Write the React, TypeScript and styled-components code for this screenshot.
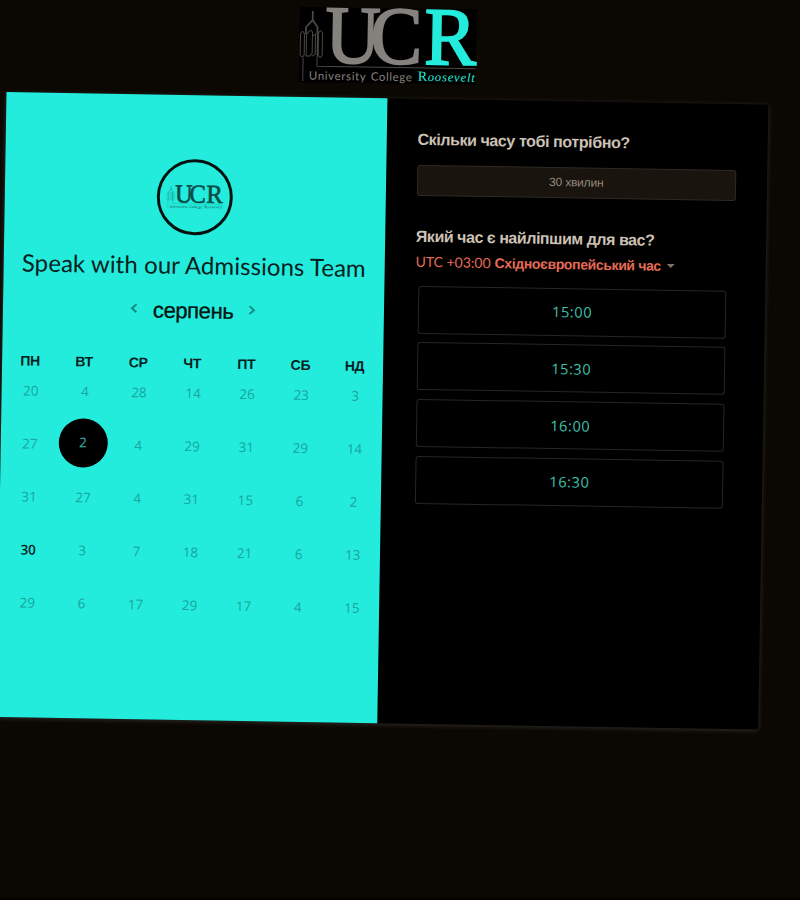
import React from "react";
import styled, { createGlobalStyle } from "styled-components";

const CYAN = "#24ecdd";

const GlobalStyle = createGlobalStyle`
  html, body { margin: 0; padding: 0; background: #0b0703; overflow: hidden; }
  *, *::before, *::after { box-sizing: border-box; }
  button { font: inherit; padding: 0; margin: 0; background: none; border: 0; cursor: pointer; }
  h1, h2, h3 { margin: 0; }
`;

const Viewport = styled.div`
  width: 100%;
  height: 100vh;
  overflow: hidden;
  background: #0b0703;
  border-bottom: 2px solid #030100;
  font-family: "Liberation Sans", Arial, sans-serif;
`;

const Page = styled.main`
  width: 800px;
  transform: rotate(0.935deg);
  transform-origin: 0 0;
`;

const Header = styled.header`
  height: 91.5px;
  padding: 2px 0 0 300px;
`;

const LogoSvg = styled.svg<{ $w: number }>`
  display: block;
  width: ${(p) => p.$w}px;
  height: ${(p) => (p.$w * 75) / 177}px;
`;

const Card = styled.section`
  display: grid;
  grid-template-columns: 381px 381px;
  width: 762px;
  height: 625px;
  margin-left: 7.7px;
  border-radius: 3px;
  background: #000;
  box-shadow: 0 1px 5px 0 #33302c;
`;

const DatePane = styled.div`
  display: flex;
  flex-direction: column;
  align-items: center;
  background: ${CYAN};
  padding-top: 64px;
`;

const Avatar = styled.div`
  width: 76px;
  height: 76px;
  flex: none;
  border: 3px solid #04110f;
  border-radius: 50%;
  display: flex;
  align-items: center;
  justify-content: center;
`;

const Title = styled.h1`
  margin-top: 13px;
  height: 34px;
  font: 400 24px/34px Lato, sans-serif;
  letter-spacing: 0.07px;
  white-space: nowrap;
  color: #07211e;
`;

const MonthBar = styled.div`
  display: flex;
  align-items: center;
  justify-content: center;
  gap: 15px;
  height: 30px;
  margin-top: 14px;
`;

const MonthName = styled.h2`
  font-size: 22px;
  line-height: 30px;
  font-weight: 400;
  letter-spacing: -0.4px;
  color: #041512;
  -webkit-text-stroke: 0.35px #041512;
`;

const ArrowButton = styled.button`
  width: 8px;
  height: 12px;
  margin-top: -3px;
  display: flex;
  color: #128d84;
`;

const WeekHeader = styled.div`
  display: grid;
  grid-template-columns: repeat(7, 54.1px);
  height: 20px;
  margin-top: 27.3px;
`;

const Weekday = styled.span`
  text-align: center;
  font-size: 14px;
  line-height: 20px;
  font-weight: 700;
  letter-spacing: -0.3px;
  color: #04211e;
`;

const Days = styled.div`
  display: grid;
  grid-template-columns: repeat(7, 54.1px);
  grid-auto-rows: 53px;
  margin-top: -5.5px;
`;

const Day = styled.button<{ $kind: "muted" | "open" | "selected" }>`
  width: 49px;
  height: 49px;
  margin: 0 0 0 2.8px;
  border-radius: 50%;
  font: ${(p) => (p.$kind === "open" ? 600 : 400)} 13.5px/49px "Open Sans", sans-serif;
  padding: ${(p) => (p.$kind === "selected" ? "0" : "2px 0 0 2px")};
  background: ${(p) => (p.$kind === "selected" ? "#000" : "transparent")};
  color: ${(p) => (p.$kind === "muted" ? "#16a69b" : p.$kind === "open" ? "#04211e" : "#31b5a9")};
`;

const TimePane = styled.div`
  padding: 30px 0 0 31px;
`;

const Question = styled.h3<{ $tracking: number }>`
  height: 22px;
  font-size: 16px;
  line-height: 22px;
  font-weight: 700;
  letter-spacing: ${(p) => p.$tracking}px;
  color: #cdc2b5;
  white-space: nowrap;
`;

const Duration = styled.button`
  display: block;
  width: 319px;
  height: 31px;
  margin: 14px 0 30px;
  border: 1px solid #2f2a23;
  border-radius: 3px;
  background: #1a140e;
  color: #94897b;
  font-size: 12px;
  letter-spacing: -0.2px;
`;

const Zone = styled.button`
  display: flex;
  align-items: center;
  height: 24px;
  margin-top: 2px;
  white-space: nowrap;
  color: #e66b56;
`;

const Offset = styled.span`
  margin-right: 4px;
  font: 400 14px/24px Lato, sans-serif;
`;

const ZoneName = styled.span`
  font-size: 14px;
  font-weight: 700;
  letter-spacing: -0.36px;
`;

const Caret = styled.span`
  margin: 1px 0 0 6px;
  border: 4px solid transparent;
  border-top-color: #7d7064;
  border-bottom: 0;
`;

const Slots = styled.div`
  display: grid;
  grid-auto-rows: 48px;
  gap: 8.8px;
  width: 308px;
  margin: 12px 0 0 3.5px;
`;

const Slot = styled.button`
  border: 1px solid #292621;
  border-radius: 3px;
  color: #3fc1ad;
  font: 400 14.5px/45px "Open Sans", sans-serif;
  letter-spacing: 0.6px;
`;

type LogoProps = { width: number; ink: string; accent: string; line: string; backdrop?: string };

function Logo({ width, ink, accent, line, backdrop }: LogoProps) {
  const serif = '"Liberation Serif", serif';
  return (
    <LogoSvg $w={width} viewBox="0 0 177 75" overflow="visible">
      {backdrop && <rect width="177" height="75" fill={backdrop} />}
      <g fill="none" stroke={line} strokeWidth="1">
        <path d="M13 4V13L6.500 20V27M13 13L18 20V27" strokeWidth="1.800" />
        <path d="M1 27q2-5 4 0V48q-2 4-4 0ZM9 25q2-3 4 0V46l-2 3H7V28ZM13 29l3-2V47l-3 2M19 26q2-5 4 0V48q-2 4-4 0ZM4 51V74M18 27V59H177" />
      </g>
      <g fontFamily={serif} fontSize="82" strokeWidth="2">
        <text x="26" y="55" fill={ink} stroke={ink} textLength="55" lengthAdjust="spacingAndGlyphs">U</text>
        <text x="71" y="55" fill={ink} stroke={ink} textLength="52" lengthAdjust="spacingAndGlyphs">C</text>
        <text x="125" y="55" fill={accent} stroke={accent} textLength="52" lengthAdjust="spacingAndGlyphs">R</text>
      </g>
      <g fill={ink} fontFamily="Lato, sans-serif" fontSize="11.500">
        <text x="10" y="72.500" textLength="57">University</text>
        <text x="72" y="72.500" textLength="41">College</text>
      </g>
      <text x="119" y="72" fill={accent} fontFamily={serif} fontSize="14">R</text>
      <text x="129" y="72" fill={accent} fontFamily={serif} fontStyle="italic" fontSize="12.500" textLength="47">oosevelt</text>
    </LogoSvg>
  );
}

function Chevron({ flip }: { flip?: boolean }) {
  return (
    <svg width="8" height="12" viewBox="0 0 8 12" fill="none" stroke="currentColor" strokeWidth="2">
      <path d={flip ? "M1.500 2L6 6L1.500 10" : "M6.500 2L2 6L6.500 10"} />
    </svg>
  );
}

const weekdays = ["ПН", "ВТ", "СР", "ЧТ", "ПТ", "СБ", "НД"];
const days = [
  20, 4, 28, 14, 26, 23, 3,
  27, 2, 4, 29, 31, 29, 14,
  31, 27, 4, 31, 15, 6, 2,
  30, 3, 7, 18, 21, 6, 13,
  29, 6, 17, 29, 17, 4, 15,
];
const SELECTED = 8;
const OPEN = 21;
const slots = ["15:00", "15:30", "16:00", "16:30"];

export default function App() {
  return (
    <>
      <GlobalStyle />
      <Viewport>
        <Page>
          <Header>
            <Logo width={177} ink="#85827d" accent={CYAN} line="#4a4844" backdrop="#000" />
          </Header>
          <Card>
            <DatePane>
              <Avatar>
                <Logo width={56} ink="#0a4a45" accent="#0a4a45" line="#128d84" />
              </Avatar>
              <Title>Speak with our Admissions Team</Title>
              <MonthBar>
                <ArrowButton aria-label="previous"><Chevron /></ArrowButton>
                <MonthName>серпень</MonthName>
                <ArrowButton aria-label="next"><Chevron flip /></ArrowButton>
              </MonthBar>
              <WeekHeader>
                {weekdays.map((d) => <Weekday key={d}>{d}</Weekday>)}
              </WeekHeader>
              <Days>
                {days.map((d, i) => (
                  <Day key={i} $kind={i === SELECTED ? "selected" : i === OPEN ? "open" : "muted"}>{d}</Day>
                ))}
              </Days>
            </DatePane>
            <TimePane>
              <Question $tracking={-0.4}>Скільки часу тобі потрібно?</Question>
              <Duration>30 хвилин</Duration>
              <Question $tracking={-0.46}>Який час є найліпшим для вас?</Question>
              <Zone>
                <Offset>UTC +03:00</Offset>
                <ZoneName>Східноєвропейський час</ZoneName>
                <Caret />
              </Zone>
              <Slots>
                {slots.map((s) => <Slot key={s}>{s}</Slot>)}
              </Slots>
            </TimePane>
          </Card>
        </Page>
      </Viewport>
    </>
  );
}
